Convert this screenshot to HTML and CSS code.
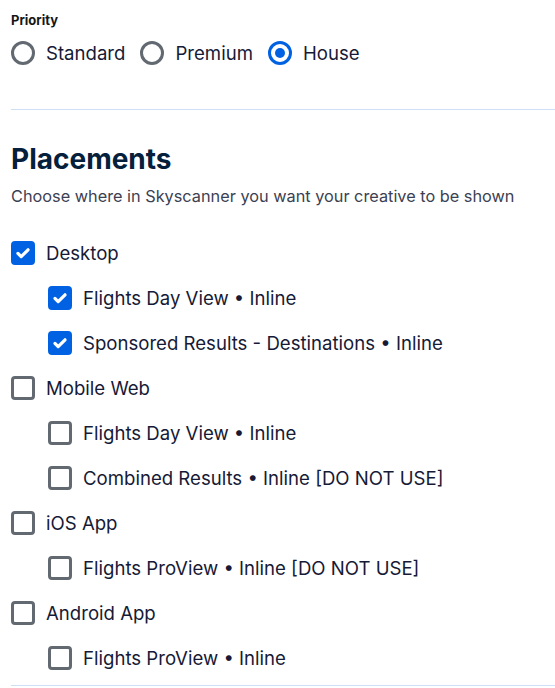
FILE: index.html
```html
<!DOCTYPE html>
<html>
<head>
<meta charset="utf-8">
<link rel="stylesheet" href="styles.css">
</head>
<body>
<div class="page">
  <section class="priority">
    <div class="field-label">Priority</div>
    <div class="radio-row">
      <label class="radio"><span class="radio-dot"></span><span class="txt">Standard</span></label>
      <label class="radio"><span class="radio-dot"></span><span class="txt">Premium</span></label>
      <label class="radio"><span class="radio-dot on"></span><span class="txt">House</span></label>
    </div>
  </section>
  <hr class="divider">
  <section class="placements">
    <h2 class="title">Placements</h2>
    <p class="subtitle">Choose where in Skyscanner you want your creative to be shown</p>
    <ul class="checks">
      <li class="check"><span class="box on"><svg viewBox="0 0 24 24"><path d="M6.5 12.5l3.5 3.5 7.5-7.5" fill="none" stroke="#fff" stroke-width="3.5" stroke-linecap="round" stroke-linejoin="round"/></svg></span><span class="txt">Desktop</span></li>
      <li class="check sub"><span class="box on"><svg viewBox="0 0 24 24"><path d="M6.5 12.5l3.5 3.5 7.5-7.5" fill="none" stroke="#fff" stroke-width="3.5" stroke-linecap="round" stroke-linejoin="round"/></svg></span><span class="txt">Flights Day View • Inline</span></li>
      <li class="check sub"><span class="box on"><svg viewBox="0 0 24 24"><path d="M6.5 12.5l3.5 3.5 7.5-7.5" fill="none" stroke="#fff" stroke-width="3.5" stroke-linecap="round" stroke-linejoin="round"/></svg></span><span class="txt">Sponsored Results - Destinations • Inline</span></li>
      <li class="check"><span class="box"></span><span class="txt">Mobile Web</span></li>
      <li class="check sub"><span class="box"></span><span class="txt">Flights Day View • Inline</span></li>
      <li class="check sub"><span class="box"></span><span class="txt">Combined Results • Inline [DO NOT USE]</span></li>
      <li class="check"><span class="box"></span><span class="txt">iOS App</span></li>
      <li class="check sub"><span class="box"></span><span class="txt">Flights ProView • Inline [DO NOT USE]</span></li>
      <li class="check"><span class="box"></span><span class="txt">Android App</span></li>
      <li class="check sub"><span class="box"></span><span class="txt">Flights ProView • Inline</span></li>
    </ul>
  </section>
  <hr class="divider bottom">
</div>
</body>
</html>
```
FILE: styles.css
```css
* { box-sizing: border-box; }
html, body { margin: 0; padding: 0; background: #fff; }
body {
  font-family: Inter, "Noto Sans", sans-serif;
  color: #161a36;
  overflow: hidden;
}
.page { padding: 11px 0 0 11px; }
.field-label {
  font-size: 13px;
  font-weight: 700;
  color: #161616;
  line-height: 18px;
}
.radio-row {
  display: flex;
  gap: 15px;
  margin-top: 6px;
}
.radio { display: flex; align-items: center; gap: 11px; height: 36px; }
.radio-dot {
  width: 24px; height: 24px;
  border-radius: 50%;
  border: 3px solid #626971;
  position: relative;
  flex: none;
}
.radio-dot.on { border-color: #0062e3; }
.radio-dot.on::after {
  content: "";
  position: absolute;
  left: 4px; top: 4px;
  width: 10px; height: 10px;
  border-radius: 50%;
  background: #0062e3;
}
.txt { font-size: 18.6px; line-height: 24px; color: #161a36; white-space: nowrap; }
.divider {
  border: 0;
  border-top: 1px solid #cfe0f6;
  margin: 38px 0 0 0;
}
.title {
  margin: 32px 0 0 0;
  font-size: 28px;
  font-weight: 700;
  line-height: 34px;
  color: #05203c;
}
.subtitle {
  margin: 9px 0 0 0;
  font-size: 16.3px;
  line-height: 22px;
  color: #3b4152;
  white-space: nowrap;
}
.checks { list-style: none; margin: 23px 0 0 0; padding: 0; }
.check { display: flex; align-items: center; gap: 11px; height: 45px; }
.check.sub { padding-left: 37px; }
.box {
  width: 24px; height: 24px;
  border: 3px solid #626971;
  border-radius: 4px;
  display: flex; align-items: center; justify-content: center;
  flex: none;
}
.box.on { background: #0062e3; border-color: #0062e3; }
.box svg { width: 22px; height: 22px; flex: none; }
.bottom { margin-top: 5px; }
```
